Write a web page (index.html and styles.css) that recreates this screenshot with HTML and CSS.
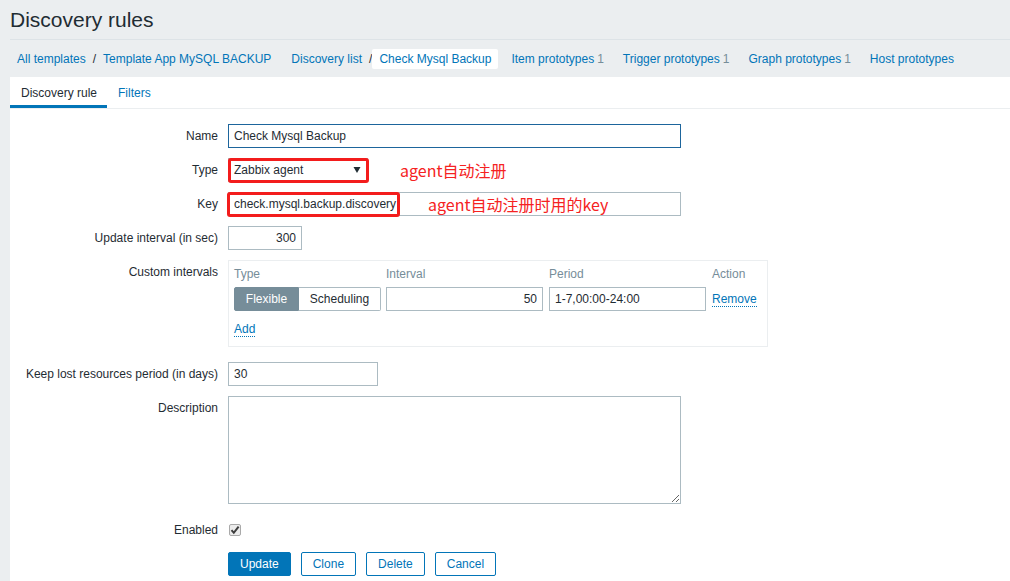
FILE: index.html
```html
<!DOCTYPE html>
<html lang="en">
<head>
<meta charset="utf-8">
<title>Discovery rules</title>
<link rel="stylesheet" href="styles.css">
</head>
<body>
<div class="page">
  <header class="page-header">
    <h1 class="page-title">Discovery rules</h1>
  </header>

  <nav class="crumbs">
    <ul class="crumb-group">
      <li class="crumb"><a href="#">All templates</a></li>
      <li class="crumb-sep">/</li>
      <li class="crumb"><a href="#">Template App MySQL BACKUP</a></li>
    </ul>
    <ul class="crumb-group">
      <li class="crumb"><a href="#">Discovery list</a></li>
      <li class="crumb-sep">/</li>
      <li class="crumb crumb-selected"><a href="#">Check Mysql Backup</a></li>
    </ul>
    <ul class="crumb-group crumb-group-tight">
      <li class="crumb"><a href="#">Item prototypes</a><span class="count">1</span></li>
    </ul>
    <ul class="crumb-group crumb-group-tight">
      <li class="crumb"><a href="#">Trigger prototypes</a><span class="count">1</span></li>
    </ul>
    <ul class="crumb-group crumb-group-tight">
      <li class="crumb"><a href="#">Graph prototypes</a><span class="count">1</span></li>
    </ul>
    <ul class="crumb-group crumb-group-tight">
      <li class="crumb"><a href="#">Host prototypes</a></li>
    </ul>
  </nav>

  <main class="panel">
    <ul class="tabs">
      <li class="tab tab-active">Discovery rule</li>
      <li class="tab"><a href="#">Filters</a></li>
    </ul>

    <form class="form">
      <div class="row">
        <label class="label">Name</label>
        <div class="field"><input class="input input-wide input-focus" type="text" value="Check Mysql Backup"></div>
      </div>

      <div class="row">
        <label class="label">Type</label>
        <div class="field field-inline">
          <span class="marked">
            <span class="select">
              <span class="select-text">Zabbix agent</span>
              <svg class="select-arrow" width="8" height="6" viewBox="0 0 8 6"><polygon points="0.5,0 7.5,0 4,6" fill="#1f2c33"/></svg>
            </span>
            <span class="mark mark-type"></span>
          </span>
          <span class="note note-type">agent自动注册</span>
        </div>
      </div>

      <div class="row">
        <label class="label">Key</label>
        <div class="field">
          <span class="marked">
            <input class="input input-wide" type="text" value="check.mysql.backup.discovery">
            <span class="mark mark-key"></span>
            <span class="note note-key">agent自动注册时用的key</span>
          </span>
        </div>
      </div>

      <div class="row">
        <label class="label">Update interval (in sec)</label>
        <div class="field"><input class="input input-num" type="text" value="300"></div>
      </div>

      <div class="row">
        <label class="label">Custom intervals</label>
        <div class="field">
          <div class="intervals">
            <div class="iv-grid">
              <div class="iv-head">Type</div>
              <div class="iv-head">Interval</div>
              <div class="iv-head">Period</div>
              <div class="iv-head">Action</div>

              <div class="segmented">
                <span class="seg seg-on">Flexible</span>
                <span class="seg seg-off">Scheduling</span>
              </div>
              <input class="input input-interval" type="text" value="50">
              <input class="input input-period" type="text" value="1-7,00:00-24:00">
              <div class="iv-action"><a href="#" class="dotted">Remove</a></div>
            </div>
            <div class="iv-add"><a href="#" class="dotted">Add</a></div>
          </div>
        </div>
      </div>

      <div class="row">
        <label class="label">Keep lost resources period (in days)</label>
        <div class="field"><input class="input input-mid" type="text" value="30"></div>
      </div>

      <div class="row">
        <label class="label">Description</label>
        <div class="field"><textarea class="textarea"></textarea></div>
      </div>

      <div class="row">
        <label class="label">Enabled</label>
        <div class="field field-inline">
          <span class="checkbox">
            <svg width="10" height="10" viewBox="0 0 10 10"><path d="M1.5 5.2 L3.8 7.8 L8.6 1.6" fill="none" stroke="#3d3d3d" stroke-width="2"/></svg>
          </span>
        </div>
      </div>

      <div class="row">
        <span class="label"></span>
        <div class="field buttons">
          <button type="button" class="btn btn-primary">Update</button>
          <button type="button" class="btn">Clone</button>
          <button type="button" class="btn">Delete</button>
          <button type="button" class="btn">Cancel</button>
        </div>
      </div>
    </form>
  </main>
</div>
</body>
</html>
```

FILE: styles.css
```css
* { box-sizing: border-box; }

html, body {
  margin: 0;
  padding: 0;
}

body {
  background: #ebeef0;
  font-family: "Liberation Sans", Arial, sans-serif;
  font-size: 12px;
  color: #1f2c33;
  overflow: hidden;
}

a {
  color: #0275b8;
  text-decoration: none;
}

ul {
  list-style: none;
  margin: 0;
  padding: 0;
}

.page {
  padding-left: 10px;
}

/* header */
.page-header {
  height: 40px;
  border-bottom: 1px solid #dde3e7;
}

.page-title {
  margin: 0;
  padding-top: 1px;
  font-size: 21px;
  font-weight: normal;
  line-height: 38px;
  color: #1f2c33;
}

/* breadcrumbs */
.crumbs {
  display: flex;
  align-items: center;
  padding: 9px 0 8px;
}

.crumb-group {
  display: flex;
  align-items: center;
  margin-right: 6px;
}

.crumb-group-tight {
  margin-right: 5px;
}

.crumb {
  padding: 0 7px;
  height: 20px;
  line-height: 20px;
  white-space: nowrap;
}

.crumb-sep {
  line-height: 20px;
  color: #1f2c33;
}

.crumb-selected {
  background: #fff;
  border-radius: 2px;
}

.count {
  margin-left: 3px;
  color: #768d99;
}

/* panel */
.panel {
  background: #fff;
  min-height: 520px;
}

.tabs {
  display: flex;
  height: 32px;
  border-bottom: 1px solid #ebeef0;
}

.tab {
  padding: 8px 10px 5px 11px;
  line-height: 16px;
  border-bottom: 3px solid transparent;
  white-space: nowrap;
}

.tab-active {
  border-bottom-color: #0275b8;
  color: #1f2c33;
}

/* form */
.form {
  padding-top: 10px;
}

.row {
  display: flex;
  align-items: flex-start;
  padding: 5px 0;
}

.label {
  flex: 0 0 208px;
  margin-right: 10px;
  text-align: right;
  line-height: 24px;
  white-space: nowrap;
  color: #1f2c33;
}

.field {
  display: block;
}

.field-inline {
  display: flex;
  align-items: center;
  height: 24px;
}

.input {
  display: block;
  height: 24px;
  border: 1px solid #acbbc2;
  padding: 0 5px;
  font-family: "Liberation Sans", Arial, sans-serif;
  font-size: 12px;
  color: #1f2c33;
  background: #fff;
  outline: none;
}

.input-wide { width: 453px; }
.input-num { width: 74px; text-align: right; }
.input-mid { width: 150px; }
.input-focus { border-color: #1d659c; }

/* select */
.select {
  display: flex;
  align-items: center;
  justify-content: space-between;
  width: 140px;
  height: 24px;
  border: 1px solid #acbbc2;
  padding: 0 6px 0 5px;
  background: #fff;
}

.select-text { color: #1f2c33; }

/* annotations */
.marked {
  position: relative;
  display: inline-block;
}

.mark {
  position: absolute;
  border: 3px solid #f31c1c;
  border-radius: 3px;
  pointer-events: none;
}

.mark-type {
  left: 0;
  top: 0;
  width: 141px;
  height: 25px;
}

.mark-key {
  left: -1px;
  top: 0;
  width: 173px;
  height: 25px;
}

.note {
  font-family: "Noto Sans CJK SC", "Liberation Sans", sans-serif;
  font-size: 16px;
  line-height: 24px;
  color: #f52222;
  white-space: nowrap;
}

.note-type {
  margin-left: 32px;
}

.note-key {
  position: absolute;
  left: 200px;
  top: 0;
}

/* custom intervals */
.intervals {
  width: 540px;
  border: 1px solid #ebeef0;
  padding: 5px;
  margin-bottom: 5px;
}

.iv-grid {
  display: grid;
  grid-template-columns: 147px 157px 157px auto;
  grid-template-rows: 21px 24px;
  column-gap: 5px;
}

.iv-head {
  padding-top: 1px;
  line-height: 14px;
  color: #768d99;
}

.iv-grid .iv-head:nth-child(3) { padding-left: 1px; }
.iv-grid .iv-head:nth-child(4) { padding-left: 2px; }

.segmented {
  display: flex;
  height: 24px;
}

.seg {
  display: flex;
  align-items: center;
  justify-content: center;
  height: 24px;
  border: 1px solid #acbbc2;
}

.seg-on {
  width: 65px;
  background: #768d99;
  border-color: #768d99;
  color: #fff;
  border-radius: 2px 0 0 2px;
}

.seg-off {
  width: 82px;
  border-left: none;
  background: #fff;
  color: #1f2c33;
  border-radius: 0 2px 2px 0;
}

.input-interval {
  width: 157px;
  text-align: right;
}

.input-period {
  width: 157px;
  margin-left: 1px;
}

.iv-action {
  display: flex;
  align-items: center;
  padding-left: 2px;
}

.dotted {
  line-height: 14px;
  border-bottom: 1px dotted #0275b8;
}

.iv-add {
  margin-top: 6px;
  height: 24px;
  display: flex;
  align-items: center;
}

/* textarea */
.textarea {
  display: block;
  width: 453px;
  height: 108px;
  border: 1px solid #acbbc2;
  padding: 5px;
  margin-bottom: 4px;
  font-family: "Liberation Sans", Arial, sans-serif;
  font-size: 12px;
  resize: both;
}

/* checkbox */
.checkbox {
  display: flex;
  align-items: center;
  justify-content: center;
  width: 12px;
  height: 12px;
  margin-left: 1px;
  border: 1px solid #a9a9a9;
  border-radius: 2px;
  background: #ececec;
}

/* buttons */
.buttons {
  display: flex;
  gap: 10px;
}

.btn {
  height: 24px;
  padding: 0 11px;
  border: 1px solid #0275b8;
  border-radius: 2px;
  background: #fff;
  color: #0275b8;
  font-family: "Liberation Sans", Arial, sans-serif;
  font-size: 12px;
  line-height: 22px;
  cursor: pointer;
}

.btn-primary {
  background: #0275b8;
  color: #fff;
}
```
